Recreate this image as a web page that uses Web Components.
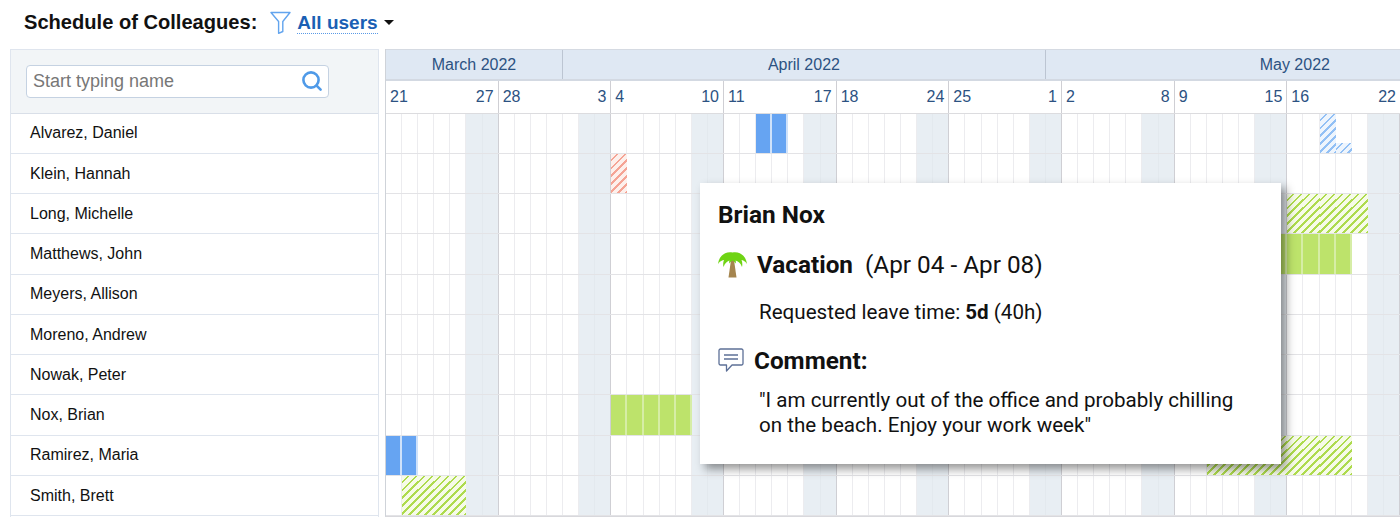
<!DOCTYPE html>
<html lang="en">
<head>
<meta charset="utf-8">
<title>Schedule of Colleagues</title>
<style>
  html, body { margin: 0; height: 525px; overflow: hidden; background: #fff; }
  body { font-family: "Liberation Sans", Arial, sans-serif; position: relative; }
  main { display: flex; padding-left: 10px; }
</style>
</head>
<body>
<app-toolbar title-text="Schedule of Colleagues:" filter="All users"></app-toolbar>
<main>
  <people-panel>
    <person-row>Alvarez, Daniel</person-row>
    <person-row>Klein, Hannah</person-row>
    <person-row>Long, Michelle</person-row>
    <person-row>Matthews, John</person-row>
    <person-row>Meyers, Allison</person-row>
    <person-row>Moreno, Andrew</person-row>
    <person-row>Nowak, Peter</person-row>
    <person-row>Nox, Brian</person-row>
    <person-row>Ramirez, Maria</person-row>
    <person-row>Smith, Brett</person-row>
  </people-panel>
  <calendar-grid>
    <cal-row marks="blue:23-24,bluehatch:58,bluehalf:59"></cal-row>
    <cal-row marks="redhatch:14"></cal-row>
    <cal-row marks="greenhatch:56-60"></cal-row>
    <cal-row marks="green:55-59"></cal-row>
    <cal-row></cal-row>
    <cal-row></cal-row>
    <cal-row></cal-row>
    <cal-row marks="green:14-18"></cal-row>
    <cal-row marks="blue:0-1,greenhatch:51-59"></cal-row>
    <cal-row marks="greenhatch:1-4"></cal-row>
  </calendar-grid>
</main>
<leave-tooltip name="Brian Nox" type="Vacation" dates="(Apr 04 - Apr 08)">
  <span slot="time">Requested leave time: <b>5d</b> (40h)</span>
  <span slot="comment">"I am currently out of the office and probably chilling on the beach. Enjoy your work week"</span>
</leave-tooltip>

<script>
class AppToolbar extends HTMLElement {
  constructor() {
    super();
    this.shadowDOM = this.attachShadow({ mode: "open" });
  }

  connectedCallback() {
    this.shadowDOM.innerHTML = `
      <style>
        :host { display: flex; align-items: center; height: 49px; padding: 0 0 4px 24px; box-sizing: border-box; }
        h1 { margin: 0; font-size: 20.100px; font-weight: 700; color: #111; }
        svg { display: block; }
        .funnel { margin-left: 13px; }
        a { margin-left: 6px; font-size: 19px; font-weight: 700; color: #1a5fb4; border-bottom: 1px dotted #5a9ae6; line-height: 21px; }
        .caret { margin-left: 6px; width: 0; height: 0; border: 5.500px solid transparent; border-top: 5.500px solid #111; border-bottom: 0; }
      </style>
      <h1>${this.getAttribute("title-text")}</h1>
      <svg class="funnel" width="21" height="23" viewBox="0 0 21 23" fill="none" stroke="#62a4ee" stroke-width="1.400" stroke-linejoin="round">
        <path d="M1 1.500h19l-7.200 9v10l-4.200 1.800V10.500z"/>
      </svg>
      <a>${this.getAttribute("filter")}</a>
      <span class="caret"></span>
    `;
  }
}

class PeoplePanel extends HTMLElement {
  constructor() {
    super();
    this.shadowDOM = this.attachShadow({ mode: "open" });
  }

  connectedCallback() {
    this.shadowDOM.innerHTML = `
      <style>
        :host { display: block; width: 369px; flex: none; box-sizing: border-box; border: 1px solid #dfe5ee; border-bottom: 0; margin-right: 6px; }
        .search { height: 62.700px; background: #f2f5f7; display: flex; align-items: center; padding: 0 49px 0 15px; border-bottom: 1px solid #d9dfe8; }
        .box { flex: 1; height: 33px; box-sizing: border-box; display: flex; align-items: center; justify-content: space-between; padding: 0 5px 0 6px; background: #fff; border: 1px solid #c5d2e2; border-radius: 4px; }
        .box span { font-size: 18px; color: #777; padding-top: 1px; }
        svg { display: block; }
      </style>
      <div class="search">
        <div class="box">
          <span>Start typing name</span>
          <svg width="22" height="22" viewBox="0 0 22 22" fill="none" stroke="#4f9ae8" stroke-width="2.600" stroke-linecap="round">
            <circle cx="10" cy="10" r="7.600"/>
            <path d="M15.600 15.600l4 4"/>
          </svg>
        </div>
      </div>
      <slot></slot>
    `;
  }
}

class PersonRow extends HTMLElement {
  constructor() {
    super();
    this.shadowDOM = this.attachShadow({ mode: "open" });
  }

  connectedCallback() {
    this.shadowDOM.innerHTML = `
      <style>
        :host { display: flex; align-items: center; height: 40.250px; box-sizing: border-box; padding-left: 19px; font-size: 16px; color: #111; border-bottom: 1px solid #dfe5ee; }
      </style>
      <slot></slot>
    `;
  }
}

class CalendarGrid extends HTMLElement {
  constructor() {
    super();
    this.shadowDOM = this.attachShadow({ mode: "open" });
  }

  connectedCallback() {
    const weeks = [[21, 27], [28, 3], [4, 10], [11, 17], [18, 24], [25, 1], [2, 8], [9, 15], [16, 22]];
    const weekCells = weeks.map(w => `<div class="week"><span>${w[0]}</span><span>${w[1]}</span></div>`).join("");
    this.shadowDOM.innerHTML = `
      <style>
        :host { display: block; flex: 1; min-width: 0; overflow: hidden; border-left: 1px solid #cfd3d9; border-bottom: 1px solid #d8d8dc; color: #2c5282; }
        .months { display: grid; grid-template-columns: repeat(72, calc(100% / 63)); }
        .days { display: grid; grid-template-columns: repeat(63, 1fr); }
        .months { height: 32px; box-sizing: border-box; background: #dfe8f3; border-top: 1px solid #d5dae2; border-bottom: 2px solid #d3d9e2; font-size: 16px; }
        .months div { display: flex; align-items: center; justify-content: center; border-right: 1px solid #bcc5d2; }
        .days { height: 32.700px; box-sizing: border-box; border-bottom: 1px solid #dcdcdf; font-size: 16px; }
        .week { grid-column: span 7; display: flex; justify-content: space-between; align-items: center; padding: 0 4px 0 4px; border-right: 1px solid #cfcfd4; }
        .week:last-child { border-right: 0; }
      </style>
      <div class="months">
        <div style="grid-column: span 11">March 2022</div>
        <div style="grid-column: span 30">April 2022</div>
        <div style="grid-column: span 31">May 2022</div>
      </div>
      <div class="days">${weekCells}</div>
      <slot></slot>
    `;
  }
}

class CalRow extends HTMLElement {
  constructor() {
    super();
    this.shadowDOM = this.attachShadow({ mode: "open" });
  }

  connectedCallback() {
    // marks look like "green:14-18,blue:0-1", day 0 is March 21
    const byDay = {};
    (this.getAttribute("marks") || "").split(",").filter(Boolean).forEach(m => {
      const [kind, range] = m.split(":");
      const [from, to] = range.split("-").map(Number);
      for (let d = from; d <= (to === undefined ? from : to); d++) byDay[d] = kind;
    });
    let cells = "";
    for (let d = 0; d < 63; d++) {
      let cls = "cell";
      if (d % 7 >= 5) cls += " off";
      if (d % 7 === 6) cls += " end";
      const mark = byDay[d] ? `<i class="${byDay[d]}"></i>` : "";
      cells += `<div class="${cls}">${mark}</div>`;
    }
    this.shadowDOM.innerHTML = `
      <style>
        :host { display: grid; grid-template-columns: repeat(63, 1fr); height: 40.250px; box-sizing: border-box; border-bottom: 1px solid #e3e3e6; }
        .cell { position: relative; border-right: 1px solid #ececef; box-sizing: border-box; min-width: 0; }
        .off { background: #e8eef3; border-right-color: #e3e9ee; }
        .end { border-right: 1px solid #cfcfd4; }
        i { position: absolute; left: 0; right: -1px; top: 0; bottom: 0; display: block; }
        .green { background: #bde36b; box-shadow: inset -2px 0 0 #d6eda6; }
        .blue { background: #66a4f2; box-shadow: inset -2px 0 0 #cfe2fa; }
        .greenhatch { background: repeating-linear-gradient(135deg, #f6fbe8 0 3.600px, #aedb4e 3.600px 5.600px); }
        .bluehatch, .bluehalf { background: repeating-linear-gradient(135deg, #eef5fd 0 3.600px, #92c0f5 3.600px 5.600px); }
        .bluehalf { top: 74%; }
        .redhatch { background: repeating-linear-gradient(135deg, #fdf0ec 0 3.600px, #f5a495 3.600px 5.600px); }
      </style>
      ${cells}
    `;
  }
}

class LeaveTooltip extends HTMLElement {
  constructor() {
    super();
    this.shadowDOM = this.attachShadow({ mode: "open" });
  }

  connectedCallback() {
    this.shadowDOM.innerHTML = `
      <style>
        :host { position: absolute; left: 700px; top: 183px; width: 581px; height: 281px; box-sizing: border-box; padding: 18px 18px 0; background: #fff; box-shadow: 5px 5px 9px rgba(0, 0, 0, .42); font-family: Roboto, sans-serif; color: #111; }
        h2 { margin: 0; font-size: 24.400px; line-height: 28px; font-weight: 700; }
        .type { display: flex; align-items: center; margin-top: 20px; height: 30px; font-size: 24.300px; }
        .type b { margin-left: 10px; font-weight: 700; }
        .type span { margin-left: 12px; }
        .time { margin: 20px 0 0 41px; font-size: 20.600px; line-height: 26px; }
        .head { display: flex; align-items: center; margin-top: 21px; height: 28px; font-size: 24.300px; font-weight: 700; }
        .head svg { margin-right: 10px; }
        .text { margin: 14px 0 0 41px; font-size: 20.600px; line-height: 25px; width: 490px; }
        svg { display: block; flex: none; }
      </style>
      <h2>${this.getAttribute("name")}</h2>
      <div class="type">
        <svg width="29" height="28" viewBox="0 0 29 28">
          <path d="M13 10h3l2.500 17.500h-8z" fill="#a5854f"/>
          <path d="M0 14C1 6 7 1 14.500 2.500 22 1 28 6 29 14c-2-3-4-4-5.500-4 1 2 1 5 .500 7-1.500-4-4-6-6.500-6.500 .500 1 .500 2 0 3-.800-1.500-1.800-2.500-3-3-1.200.500-2.200 1.500-3 3-.500-1-.500-2 0-3C9.500 11 7 13 5.500 17c-.500-2-.500-5 .500-7C4.500 10 2 11 0 14z" fill="#6fd414"/>
        </svg>
        <b>${this.getAttribute("type")}</b>
        <span>${this.getAttribute("dates")}</span>
      </div>
      <div class="time"><slot name="time"></slot></div>
      <div class="head">
        <svg width="26" height="25" viewBox="0 0 26 25" fill="none" stroke="#5d7097" stroke-width="1.300" stroke-linejoin="round">
          <path d="M2.500 1h21a1.500 1.500 0 0 1 1.500 1.500v13a1.500 1.500 0 0 1-1.500 1.500H14l-5.500 6v-6H2.500A1.500 1.500 0 0 1 1 15.500v-13A1.500 1.500 0 0 1 2.500 1z"/>
          <path d="M6 7h14M6 11h14"/>
        </svg>
        Comment:
      </div>
      <div class="text"><slot name="comment"></slot></div>
    `;
  }
}

customElements.define("app-toolbar", AppToolbar);
customElements.define("people-panel", PeoplePanel);
customElements.define("person-row", PersonRow);
customElements.define("calendar-grid", CalendarGrid);
customElements.define("cal-row", CalRow);
customElements.define("leave-tooltip", LeaveTooltip);
</script>
</body>
</html>
